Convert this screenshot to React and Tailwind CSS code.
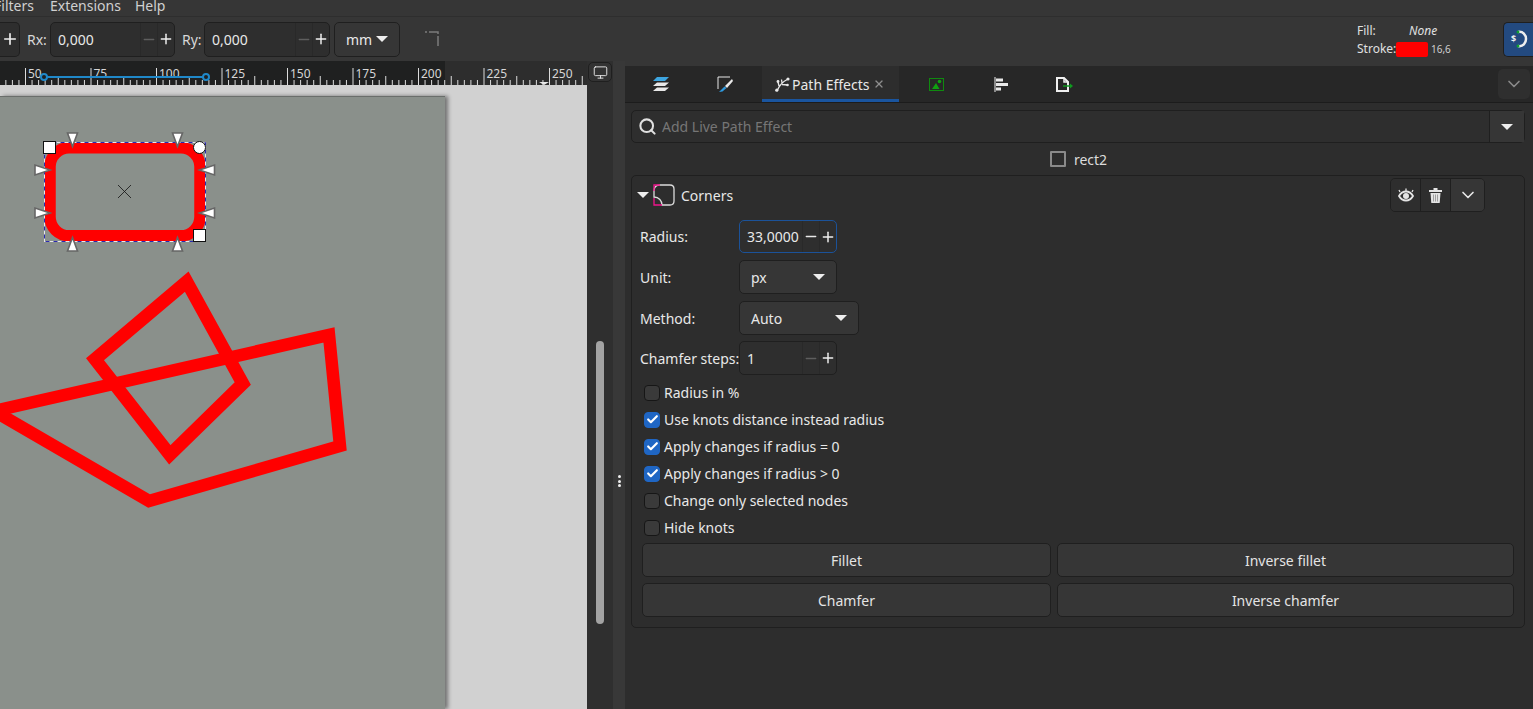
import { Check, ChevronDown, Minus, Monitor, Plus, Search, X } from 'lucide-react'

const FONT = 'font-["Noto_Sans","Open_Sans",sans-serif]'

function Caret({ className = '' }) {
  return (
    <svg width="12" height="6" viewBox="0 0 12 6" className={className}>
      <path d="M0 0h12L6 6z" fill="#eeeeee" />
    </svg>
  )
}

function SpinInput({ value, width, focused, dimMinus, textClass = 'pl-[7px]', minusWidth = 'w-[17px]' }) {
  return (
    <div
      className={`flex h-full items-center rounded-[5px] border bg-[#2e2e2e] ${width} ${focused ? 'border-[#1b5299]' : 'border-[#1f1f1f]'}`}
    >
      <span className={`flex-1 text-[#e8e8e8] ${textClass}`}>{value}</span>
      <span className={`flex h-full ${minusWidth} items-center justify-center border-l border-[#292929]`}>
        <Minus size={17} strokeWidth={2.2} color={dimMinus ? '#5e5e5e' : '#e8e8e8'} />
      </span>
      <span className="flex h-full w-[17px] items-center justify-center border-l border-[#292929]">
        <Plus size={18} strokeWidth={2.2} color="#f0f0f0" />
      </span>
    </div>
  )
}

function Dropdown({ label, width }) {
  return (
    <div className={`flex h-full items-center justify-between rounded-[5px] border border-[#1f1f1f] bg-[#363636] pl-[11px] pr-[11px] text-[#e8e8e8] ${width}`}>
      <span>{label}</span>
      <Caret />
    </div>
  )
}

function FormRow({ label, height, mt, children }) {
  return (
    <div className={`flex items-center pl-[7px] ${height} ${mt}`}>
      <span className="w-[99px] shrink-0 whitespace-nowrap text-[#e8e8e8]">{label}</span>
      <div className="h-full">{children}</div>
    </div>
  )
}

function CheckRow({ label, checked }) {
  return (
    <div className="flex h-[27px] items-center pl-[11px]">
      <span
        className={`flex h-[16px] w-[16px] items-center justify-center rounded-[4px] border ${checked ? 'border-[#1f66c4] bg-[#1f66c4]' : 'border-[#161616] bg-[#3a3a3a]'}`}
      >
        {checked && <Check size={13} strokeWidth={4} color="#ffffff" />}
      </span>
      <span className="ml-[4px] text-[#e8e8e8]">{label}</span>
    </div>
  )
}

function ActionButton({ label }) {
  return (
    <div className="flex h-[34px] items-center justify-center rounded-[5px] border border-[#1f1f1f] bg-[#363636] text-[#e4e4e4]">
      {label}
    </div>
  )
}

function Ruler() {
  const ticks = []
  for (let i = -3; i < 90; i++) {
    const x = 25.5 + i * 6.55
    const major = i % 10 === 0
    const mid = !major && i % 5 === 0
    const top = major ? 7 : mid ? 15 : 19
    ticks.push(<line key={i} x1={x} x2={x} y1={top} y2={24} stroke="#dcdcdc" strokeWidth="1" />)
  }
  const labels = [50, 75, 100, 125, 150, 175, 200, 225, 250]
  return (
    <svg width="587" height="24" viewBox="0 0 587 24" className="block shrink-0">
      <rect width="445" height="24" fill="#1f2020" />
      <rect x="445" width="142" height="24" fill="#2d2d2d" />
      {ticks}
      {labels.map((n, i) => (
        <text key={n} x={28 + i * 65.5} y="17" fontSize="12" fill="#d6d6d6" fontFamily="Noto Sans">{n}</text>
      ))}
      <path d="M539 21h10l-5 3z" fill="#e8e8e8" />
      <line x1="44" x2="206" y1="16" y2="16" stroke="#1f88c9" strokeWidth="2" />
      <circle cx="44" cy="16" r="3" fill="#1f2020" stroke="#1f88c9" strokeWidth="2" />
      <circle cx="206" cy="16" r="3" fill="#1f2020" stroke="#1f88c9" strokeWidth="2" />
    </svg>
  )
}

function Arrow({ d }) {
  return <path d={d} fill="#ffffff" stroke="#666666" strokeWidth="1.6" strokeLinejoin="miter" />
}

function CanvasShapes() {
  return (
    <svg width="587" height="624" viewBox="0 85 587 624" className="absolute left-0 top-0">
      <path d="M186.700 281.700 242.800 383.500 169.800 454.800 95 359.200Z" fill="none" stroke="#ff0000" strokeWidth="13" strokeMiterlimit="10" />
      <path d="M-6 411 329 335 340 446 149 501Z" fill="none" stroke="#ff0000" strokeWidth="12.500" strokeMiterlimit="10" />
      <rect x="50" y="147.800" width="150" height="88" rx="19" fill="none" stroke="#ff0000" strokeWidth="11.500" />
      <rect x="44.500" y="142.500" width="161" height="99" fill="none" stroke="#e8e8e8" strokeWidth="1" />
      <rect x="44.500" y="142.500" width="161" height="99" fill="none" stroke="#2a2ab0" strokeWidth="1" strokeDasharray="4 4" />
      <path d="M118 185l13 13M131 185l-13 13" stroke="#111111" strokeWidth="0.800" />
      <Arrow d="M67.500 133h10l-5 13.500z" />
      <Arrow d="M172.500 133h10l-5 13.500z" />
      <Arrow d="M67.500 251h10l-5-13.500z" />
      <Arrow d="M172.500 251h10l-5-13.500z" />
      <Arrow d="M35 165v10l15-5z" />
      <Arrow d="M35 208v10l15-5z" />
      <Arrow d="M214.500 165v10l-15-5z" />
      <Arrow d="M214.500 208v10l-15-5z" />
      <rect x="43.500" y="141.500" width="12" height="12" fill="#ffffff" stroke="#111111" />
      <rect x="193.500" y="229.500" width="12" height="12" fill="#ffffff" stroke="#111111" />
      <circle cx="199.500" cy="147.500" r="6" fill="#ffffff" stroke="#111111" />
    </svg>
  )
}

function LayersIcon() {
  return (
    <svg width="16" height="16" viewBox="0 0 16 16">
      <path d="M4 1h12l-4 4H0z" fill="#3da5e0" />
      <path d="M4 6.500h12l-4 3.500H0z" fill="#e8e8e8" />
      <path d="M4 11.500h12l-4 3.500H0z" fill="#e8e8e8" />
    </svg>
  )
}

function FillStrokeIcon() {
  return (
    <svg width="17" height="17" viewBox="0 0 17 17">
      <path d="M1 13V1h12" fill="none" stroke="#e8e8e8" strokeWidth="1" />
      <path d="M15 3 8 10l2 2 6-7z" fill="#e8e8e8" />
      <path d="M7.500 10.500 5 13l-3 3 3.500-.5 4-3.500z" fill="#2e9ae0" />
    </svg>
  )
}

function PathEffectsIcon() {
  return (
    <svg width="15" height="15" viewBox="0 0 15 15">
      <path d="M2 14C4 9 7 5 13 2M4 9 3 5M7 6 6.500 2.500M7 7.500l5.500.5" fill="none" stroke="#e8e8e8" strokeWidth="1.300" />
      <circle cx="13" cy="2" r="1.600" fill="#e8e8e8" />
      <circle cx="3" cy="4.500" r="1.400" fill="#e8e8e8" />
      <circle cx="12.500" cy="8" r="1.300" fill="#e8e8e8" />
      <circle cx="1.800" cy="13.200" r="1.600" fill="#e8e8e8" />
    </svg>
  )
}

function ImageIcon() {
  return (
    <svg width="15" height="13" viewBox="0 0 15 13">
      <rect x="0.500" y="0.500" width="14" height="12" fill="none" stroke="#0f8a0f" />
      <path d="M3 11 7 5l3.500 6z" fill="#0fa00f" />
      <circle cx="10.500" cy="3.500" r="1.800" fill="#0fa00f" />
    </svg>
  )
}

function AlignIcon() {
  return (
    <svg width="14" height="15" viewBox="0 0 14 15">
      <rect x="0" y="0" width="2" height="15" fill="#8a8a8a" />
      <rect x="2" y="1.500" width="7" height="3" fill="#e8e8e8" />
      <rect x="2" y="6" width="12" height="3" fill="#e8e8e8" />
      <rect x="2" y="10.500" width="5" height="3" fill="#e8e8e8" />
    </svg>
  )
}

function DocIcon() {
  return (
    <svg width="17" height="15" viewBox="0 0 17 15">
      <path d="M1 1h7l4 4v9H1z" fill="none" stroke="#f0f0f0" strokeWidth="2" />
      <path d="M8 1v4h4" fill="none" stroke="#f0f0f0" strokeWidth="1.500" />
      <path d="M7 8.200h7V6.500l3 2.500-3 2.500V9.800H7z" fill="#0f9a1f" />
    </svg>
  )
}

function CornersIcon() {
  return (
    <svg width="22" height="22" viewBox="0 0 22 22">
      <path d="M1 13V7C1 3 3 1 7 1h10c3 0 4 1 4 4v12c0 3-1 4-4 4H9c0-4-3-8-8-8z" fill="none" stroke="#dcdcdc" strokeWidth="1.300" />
      <path d="M1 7V1h6M1 14v7h8" fill="none" stroke="#f0148c" strokeWidth="1.300" />
    </svg>
  )
}

function EyeIcon() {
  return (
    <svg width="16" height="14" viewBox="0 0 16 14">
      <path d="M1 8c2-3.500 4.500-4.500 7-4.500S13 4.500 15 8c-2 3.500-4.500 4.500-7 4.500S3 11.500 1 8z" fill="none" stroke="#e4e4e4" strokeWidth="1.800" />
      <circle cx="8" cy="8" r="3" fill="#e4e4e4" />
      <path d="M2 4 1 2M14 4l1-2M8 3V.5" stroke="#e4e4e4" strokeWidth="1.300" />
    </svg>
  )
}

function TrashIcon() {
  return (
    <svg width="13" height="15" viewBox="0 0 13 15">
      <path d="M0 2h13v2H0zM4.500 0h4v2h-4z" fill="#e4e4e4" />
      <path d="M1.500 5h10l-.8 10H2.300z" fill="#e4e4e4" />
      <path d="M4.500 6.500v7M6.500 6.500v7M8.500 6.500v7" stroke="#8c8c8c" strokeWidth="0.800" />
    </svg>
  )
}

function CornerToolIcon() {
  return (
    <svg width="16" height="16" viewBox="0 0 16 16">
      <path d="M1 1h2M5 1h9v2M14 5v10" fill="none" stroke="#7c7c7c" strokeWidth="1.500" />
    </svg>
  )
}

function SnapIcon() {
  return (
    <svg width="18" height="20" viewBox="0 0 18 20">
      <path d="M8 3c5-1 8 3 8 7s-3 8-8 7" fill="none" stroke="#eeeeee" strokeWidth="2.500" />
      <circle cx="8" cy="3" r="1.500" fill="#10a030" />
      <circle cx="8" cy="17" r="1.500" fill="#10a030" />
      <text x="1" y="13" fontSize="9" fontWeight="700" fill="#eeeeee" fontFamily="Noto Sans">$</text>
    </svg>
  )
}

function TabIcon({ children, className }) {
  return <div className={`flex h-full items-center justify-center ${className}`}>{children}</div>
}

export default function App() {
  return (
    <div className={`flex h-[709px] w-[1533px] flex-col overflow-hidden bg-[#363636] text-[14px] ${FONT}`}>
      {/* menu bar, scrolled off the top of the shot */}
      <div className="flex h-[17px] shrink-0 gap-[14px] overflow-hidden border-b border-[#2e2e2e] text-[#d0d0d0]">
        <span className="ml-[-6px] mt-[-4px] leading-[20px]">Filters</span>
        <span className="ml-[2px] mt-[-4px] leading-[20px]">Extensions</span>
        <span className="mt-[-4px] leading-[20px]">Help</span>
      </div>

      {/* tool controls */}
      <div className="flex h-[44px] shrink-0 items-center">
        <div className="flex h-[35px] w-[20px] items-center justify-center rounded-r-[5px] border border-l-0 border-[#1f1f1f] bg-[#2e2e2e]">
          <Plus size={18} strokeWidth={2.2} color="#f0f0f0" />
        </div>
        <span className="ml-[7px] w-[23px] text-[#d8d8d8]">Rx:</span>
        <div className="h-[35px]"><SpinInput value="0,000" width="w-[125px]" dimMinus /></div>
        <span className="ml-[7px] w-[22px] text-[#d8d8d8]">Ry:</span>
        <div className="h-[35px]"><SpinInput value="0,000" width="w-[126px]" dimMinus /></div>
        <div className="ml-[4px] h-[35px]"><Dropdown label="mm" width="w-[66px]" /></div>
        <div className="ml-[24px]"><CornerToolIcon /></div>

        <div className="ml-auto mr-[46px] mt-[2px] flex w-[100px] flex-col text-[12px] leading-[18px] text-[#e0e0e0]">
          <div className="flex">
            <span className="w-[52px]">Fill:</span>
            <span className="italic">None</span>
          </div>
          <div className="flex items-center">
            <span className="w-[39px]">Stroke:</span>
            <span className="h-[15px] w-[32px] rounded-[2px] bg-[#ff0000]" />
            <span className="ml-[3px] text-[10px] text-[#d0d0d0]">16,6</span>
          </div>
        </div>
        <div className="flex h-[35px] w-[30px] shrink-0 items-center justify-center rounded-l-[5px] border border-r-0 border-[#1f1f1f] bg-[#234a80]">
          <SnapIcon />
        </div>
      </div>

      <div className="flex min-h-0 flex-1">
        {/* canvas column */}
        <div className="flex w-[587px] shrink-0 flex-col">
          <Ruler />
          <div className="relative flex-1 overflow-hidden bg-[#d1d1d1] pt-[11px]">
            <div className="h-full w-[445px] border-t border-[#6a6e6b] bg-[#8a908b] shadow-[3px_0_4px_rgba(0,0,0,0.45)]" />
            <CanvasShapes />
          </div>
        </div>

        {/* scrollbar column */}
        <div className="flex w-[26px] shrink-0 flex-col items-center bg-[#2f2f2f]">
          <div className="mt-[1px] flex h-[20px] w-[24px] items-center justify-center rounded-[5px] border border-[#1f1f1f] bg-[#333333]">
            <Monitor size={15} strokeWidth={1.5} color="#e8e8e8" />
          </div>
          <div className="mt-[259px] h-[283px] w-[8px] rounded-full bg-[#a3a3a3]" />
        </div>

        {/* pane handle */}
        <div className="flex w-[12px] shrink-0 flex-col items-center gap-[1.5px] bg-[#383838] pt-[414px]">
          <span className="h-[3px] w-[3px] rounded-full bg-[#eeeeee]" />
          <span className="h-[3px] w-[3px] rounded-full bg-[#eeeeee]" />
          <span className="h-[3px] w-[3px] rounded-full bg-[#eeeeee]" />
        </div>

        {/* dock */}
        <div className="min-w-0 flex-1 pt-[5px]">
          <div className="flex h-full flex-col bg-[#2d2d2d]">
            <div className="flex h-[37px] shrink-0 items-center border-b border-[#1c1c1c] bg-[#272727]">
              <TabIcon className="w-[72px]"><LayersIcon /></TabIcon>
              <TabIcon className="mr-[8px] w-[57px]"><FillStrokeIcon /></TabIcon>
              <div className="flex h-full w-[137px] items-center border-b-[3px] border-[#1a559f] bg-[#2d2d2d] pl-[13px] pt-[3px] text-[#e8e8e8]">
                <PathEffectsIcon />
                <span className="ml-[2px]">Path Effects</span>
                <X size={12} strokeWidth={2.5} color="#8e8e8e" className="ml-[4px]" />
              </div>
              <TabIcon className="w-[74px]"><ImageIcon /></TabIcon>
              <TabIcon className="ml-[1px] w-[54px]"><AlignIcon /></TabIcon>
              <TabIcon className="w-[73px]"><DocIcon /></TabIcon>
              <div className="ml-auto mr-[3px] flex h-[30px] w-[32px] items-center justify-center rounded-[5px] bg-[#2f2f2f]">
                <ChevronDown size={20} strokeWidth={2} color="#8a8a8a" />
              </div>
            </div>

            <div className="flex flex-1 flex-col pl-[6px] pr-[8px] pt-[7px]">
              <div className="flex h-[33px] items-center rounded-[5px] border border-[#1f1f1f] bg-[#2e2e2e]">
                <Search size={19} strokeWidth={2.6} color="#e0e0e0" className="ml-[6px]" />
                <span className="ml-[5px] flex-1 text-[#767676]">Add Live Path Effect</span>
                <div className="flex h-full w-[35px] items-center justify-center border-l border-[#1f1f1f] bg-[#363636]">
                  <Caret />
                </div>
              </div>

              <div className="flex h-[32px] items-center justify-center pl-[1px]">
                <span className="h-[16px] w-[16px] rounded-[1px] border-2 border-[#8a8a8a]" />
                <span className="ml-[8px] text-[#dcdcdc]">rect2</span>
              </div>

              <div className="flex h-[453px] flex-col rounded-[5px] border border-[#1f1f1f]">
                <div className="flex h-[38px] items-center pl-[5px]">
                  <Caret className="mr-[4px]" />
                  <CornersIcon />
                  <span className="ml-[6px] text-[#e8e8e8]">Corners</span>
                  <div className="ml-auto mr-[39px] flex h-[34px] overflow-hidden rounded-[5px] border border-[#1f1f1f]">
                    <div className="flex w-[29px] items-center justify-center bg-[#2e2e2e]"><EyeIcon /></div>
                    <div className="flex w-[30px] items-center justify-center border-l border-[#1f1f1f] bg-[#2e2e2e]"><TrashIcon /></div>
                    <div className="flex w-[34px] items-center justify-center border-l border-[#1f1f1f] bg-[#363636]">
                      <ChevronDown size={20} strokeWidth={2} color="#e8e8e8" />
                    </div>
                  </div>
                </div>

                <div className="pl-[1px]">
                  <FormRow label="Radius:" height="h-[33px]" mt="mt-[6px]">
                    <SpinInput value="33,0000" width="w-[98px]" focused />
                  </FormRow>
                  <FormRow label="Unit:" height="h-[34px]" mt="mt-[7px]">
                    <Dropdown label="px" width="w-[98px]" />
                  </FormRow>
                  <FormRow label="Method:" height="h-[34px]" mt="mt-[7px]">
                    <Dropdown label="Auto" width="w-[120px]" />
                  </FormRow>
                  <FormRow label="Chamfer steps:" height="h-[34px]" mt="mt-[6px]">
                    <SpinInput value="1" width="w-[98px]" dimMinus />
                  </FormRow>

                  <div className="mt-[4px]">
                    <CheckRow label="Radius in %" />
                    <CheckRow label="Use knots distance instead radius" checked />
                    <CheckRow label="Apply changes if radius = 0" checked />
                    <CheckRow label="Apply changes if radius > 0" checked />
                    <CheckRow label="Change only selected nodes" />
                    <CheckRow label="Hide knots" />
                  </div>

                  <div className="mt-[2px] grid grid-cols-[409px_457px] gap-x-[6px] gap-y-[6px] pl-[9px]">
                    <ActionButton label="Fillet" />
                    <ActionButton label="Inverse fillet" />
                    <ActionButton label="Chamfer" />
                    <ActionButton label="Inverse chamfer" />
                  </div>
                </div>
              </div>
            </div>
          </div>
        </div>
      </div>
    </div>
  )
}
